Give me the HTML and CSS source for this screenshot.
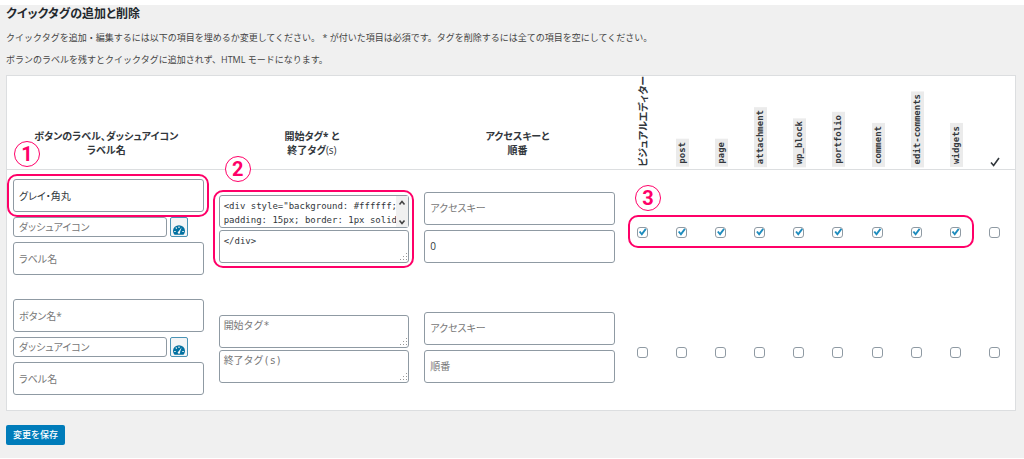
FILE: index.html
```html
<!DOCTYPE html>
<html lang="ja">
<head>
<meta charset="utf-8">
<title>クイックタグの追加と削除</title>
<link rel="stylesheet" href="styles.css">
</head>
<body>
<svg class="defs" aria-hidden="true">
  <symbol id="gauge" viewBox="0 0 20 16"><path fill="currentColor" d="M2.500 16A10 9.600 0 1 1 17.500 16z"/><path fill="#f3f5f6" d="M9 2h2v2.500H9zM4 4.500l1.300-1.300 1.600 1.800-1.200 1.200zM2 9.500h2.500v2H2zM15.500 9.500H18v2h-2.500zM14.500 3.500l-2.800 8a2 2 0 1 1-2.500-1z"/></symbol>
  <symbol id="grip" viewBox="0 0 8 8"><path fill="#999" d="M6 0h1v1H6zM6 3h1v1H6zM3 3h1v1H3zM6 6h1v1H6zM3 6h1v1H3zM0 6h1v1H0z"/></symbol>
  <symbol id="scroll" viewBox="0 0 12 31"><path fill="#f0f0f0" d="M0 0h12v31H0z"/><path fill="none" stroke="#444" stroke-width="1.600" d="M3.500 8.500 6 5.500l2.500 3M3.500 24.500l2.500 3 2.500-3"/></symbol>
</svg>
<main class="page">
  <h1 class="title">クイックタグの追加と削除</h1>
  <p class="note">クイックタグを追加・編集するには以下の項目を埋めるか変更してください。 * が付いた項目は必須です。タグを削除するには全ての項目を空にしてください。</p>
  <p class="note">ボランのラベルを残すとクイックタグに追加されず、HTML モードになります。</p>
  <form>
    <table class="tags">
      <colgroup><col class="wide" span="3"><col span="10"></colgroup>
      <thead>
        <tr>
          <th scope="col">ボタンのラベル、ダッシュアイコン<br>ラベル名</th>
          <th scope="col">開始タグ* と<br>終了タグ<span class="plain">(s)</span></th>
          <th scope="col">アクセスキーと<br>順番</th>
          <th scope="col" class="up"><span class="side">ビジュアルエディター</span></th>
          <th scope="col" class="up"><code class="side">post</code></th>
          <th scope="col" class="up"><code class="side">page</code></th>
          <th scope="col" class="up"><code class="side">attachment</code></th>
          <th scope="col" class="up"><code class="side">wp_block</code></th>
          <th scope="col" class="up"><code class="side">portfolio</code></th>
          <th scope="col" class="up"><code class="side">comment</code></th>
          <th scope="col" class="up"><code class="side">edit-comments</code></th>
          <th scope="col" class="up"><code class="side">widgets</code></th>
          <th scope="col" class="up"><svg class="tick" viewBox="0 0 10 10" role="img" aria-label="すべて"><path d="M1 5.500 3.600 8.500 9 1" fill="none" stroke="#32373c" stroke-width="1.600"/></svg></th>
        </tr>
      </thead>
      <tbody>
        <tr>
          <td>
            <div class="stack">
              <div class="field"><input class="box" type="text" value="グレイ・角丸" aria-label="ボタン名"><span class="ring"></span><span class="num num-one">1</span></div>
              <div class="icon-row"><input class="box small" type="text" placeholder="ダッシュアイコン" aria-label="ダッシュアイコン"><button class="pick" type="button" aria-label="アイコンを選択"><svg><use href="#gauge"/></svg></button></div>
              <input class="box" type="text" placeholder="ラベル名" aria-label="ラベル名">
            </div>
          </td>
          <td class="codes">
            <div class="stack tight field">
              <div class="field"><textarea class="box area" aria-label="開始タグ">&lt;div style="background: #ffffff;
padding: 15px; border: 1px solid</textarea><svg class="scroll" aria-hidden="true"><use href="#scroll"/></svg></div>
              <div class="field"><textarea class="box area" aria-label="終了タグ">&lt;/div&gt;</textarea><svg class="grip" aria-hidden="true"><use href="#grip"/></svg></div>
              <span class="ring"></span><span class="num num-two">2</span>
            </div>
          </td>
          <td>
            <div class="stack">
              <input class="box" type="text" placeholder="アクセスキー" aria-label="アクセスキー">
              <input class="box" type="text" value="0" aria-label="順番">
            </div>
          </td>
          <td class="check"><input type="checkbox" checked aria-label="ビジュアルエディター"><span class="ring ring-row"></span><span class="num num-three">3</span></td>
          <td class="check"><input type="checkbox" checked aria-label="post"></td>
          <td class="check"><input type="checkbox" checked aria-label="page"></td>
          <td class="check"><input type="checkbox" checked aria-label="attachment"></td>
          <td class="check"><input type="checkbox" checked aria-label="wp_block"></td>
          <td class="check"><input type="checkbox" checked aria-label="portfolio"></td>
          <td class="check"><input type="checkbox" checked aria-label="comment"></td>
          <td class="check"><input type="checkbox" checked aria-label="edit-comments"></td>
          <td class="check"><input type="checkbox" checked aria-label="widgets"></td>
          <td class="check"><input type="checkbox" aria-label="すべて"></td>
        </tr>
        <tr>
          <td>
            <div class="stack">
              <input class="box" type="text" placeholder="ボタン名*" aria-label="ボタン名">
              <div class="icon-row"><input class="box small" type="text" placeholder="ダッシュアイコン" aria-label="ダッシュアイコン"><button class="pick" type="button" aria-label="アイコンを選択"><svg><use href="#gauge"/></svg></button></div>
              <input class="box" type="text" placeholder="ラベル名" aria-label="ラベル名">
            </div>
          </td>
          <td class="codes">
            <div class="stack tight">
              <div class="field"><textarea class="box area" placeholder="開始タグ*" aria-label="開始タグ"></textarea><svg class="grip" aria-hidden="true"><use href="#grip"/></svg></div>
              <div class="field"><textarea class="box area" placeholder="終了タグ(s)" aria-label="終了タグ"></textarea><svg class="grip" aria-hidden="true"><use href="#grip"/></svg></div>
            </div>
          </td>
          <td>
            <div class="stack">
              <input class="box" type="text" placeholder="アクセスキー" aria-label="アクセスキー">
              <input class="box" type="text" placeholder="順番" aria-label="順番">
            </div>
          </td>
          <td class="check"><input type="checkbox" aria-label="ビジュアルエディター"></td>
          <td class="check"><input type="checkbox" aria-label="post"></td>
          <td class="check"><input type="checkbox" aria-label="page"></td>
          <td class="check"><input type="checkbox" aria-label="attachment"></td>
          <td class="check"><input type="checkbox" aria-label="wp_block"></td>
          <td class="check"><input type="checkbox" aria-label="portfolio"></td>
          <td class="check"><input type="checkbox" aria-label="comment"></td>
          <td class="check"><input type="checkbox" aria-label="edit-comments"></td>
          <td class="check"><input type="checkbox" aria-label="widgets"></td>
          <td class="check"><input type="checkbox" aria-label="すべて"></td>
        </tr>
      </tbody>
    </table>
    <button class="save" type="submit">変更を保存</button>
  </form>
</main>
</body>
</html>
```
FILE: styles.css
```css
* { box-sizing: border-box; }
body {
  display: flex;
  flex-direction: column;
  min-height: 100vh;
  margin: 0;
  padding: 5px 0 1px;
  background: #fff;
  color: #444;
  font: 10px/14px "Open Sans", "Noto Sans CJK JP", sans-serif;
}
.defs { position: absolute; width: 0; height: 0; }
.page { flex: 1; padding: 0 8px 12px 6px; background: #f0f0f0; }
.title {
  margin: 0 0 8px;
  color: #23282d;
  font-size: 12px;
  line-height: 18px;
  font-weight: 700;
  font-feature-settings: "palt";
}
.note { margin: 0 0 8px; font-size: 9px; }

.tags {
  width: 100%;
  table-layout: fixed;
  border-collapse: separate;
  border-spacing: 0;
  border: 1px solid #dcdee0;
  background: #fff;
}
.wide { width: 20.4%; }
th {
  height: 94px;
  padding: 0 7px 12px 0;
  border-bottom: 1px solid #dcdee0;
  color: #32373c;
  font-weight: 700;
  font-feature-settings: "palt";
  text-align: center;
  vertical-align: bottom;
}
.plain { font-weight: 400; }
.up { padding: 0 0 2px; }
.side {
  display: inline-block;
  margin-top: -8px;
  line-height: 14px;
  vertical-align: bottom;
  white-space: nowrap;
  writing-mode: vertical-rl;
  text-orientation: sideways;
  transform: rotate(180deg);
}
code.side {
  padding: 3px 0;
  background: #ebebeb;
  font: 700 9px/13px "DejaVu Sans Mono", monospace;
}
.tick { display: inline-block; width: 10px; height: 10px; vertical-align: bottom; }
td { padding: 9px 9px 15px 6px; }
td.codes { padding: 10px 9px 13px 6px; }
td.check { position: relative; padding: 4px 2px 0 0; text-align: center; }

.stack { display: flex; flex-direction: column; gap: 5px; }
.stack.tight { gap: 2px; }
.field { position: relative; display: flex; }
.stack.field { flex-direction: column; }
.box {
  display: block;
  width: 100%;
  height: 33px;
  margin: 0;
  padding: 0 5px;
  border: 1px solid #8f9aa3;
  border-radius: 3px;
  background: #fff;
  color: #32373c;
  font: inherit;
  font-feature-settings: "palt";
}
.box::placeholder { color: #777; opacity: 1; }
.box.small { flex: 1; height: 20px; }
.area {
  padding: 3px 4px;
  overflow: hidden;
  resize: none;
  font: 9px/14px "DejaVu Sans Mono", "Noto Sans CJK JP", monospace;
}
.area::placeholder { font-size: 10px; }
.icon-row { display: flex; gap: 3px; padding-right: 16px; }
.pick {
  display: flex;
  align-items: flex-end;
  justify-content: center;
  width: 18px;
  height: 20px;
  padding: 0 0 1px;
  border: 1px solid #4a93b5;
  border-radius: 2px;
  background: #f3f5f6;
  color: #0071a1;
}
.pick svg { width: 12px; height: 10px; }
.grip { position: absolute; right: 1px; bottom: 2px; width: 8px; height: 8px; }
.scroll { position: absolute; right: 1px; top: 1px; width: 12px; height: 31px; }

input[type="checkbox"] {
  display: block;
  width: 11px;
  height: 11px;
  margin: 0 auto;
  border: 1px solid #8f9aa3;
  border-radius: 3px;
  background: #fff;
  appearance: none;
}
input[type="checkbox"]:checked::before {
  content: "";
  display: block;
  width: 9px;
  height: 9px;
  background: #1e8cbe;
  clip-path: polygon(10% 50%, 28% 38%, 42% 58%, 80% 8%, 96% 22%, 44% 92%);
}

.ring {
  position: absolute;
  inset: -5px -5px -5px -6px;
  border: 2px solid #ff0068;
  border-radius: 10px;
  pointer-events: none;
}
.ring-row { inset: 45px auto auto 4px; width: calc(900% - 6px); height: 33px; }
.num {
  position: absolute;
  width: 26px;
  height: 26px;
  border: 1px solid #ff0068;
  border-radius: 50%;
  background: #fff;
  color: #ff0068;
  font: 700 20px/24px Roboto, sans-serif;
  text-align: center;
}
.num-one { top: -38px; left: 1px; }
.num-two { top: -39px; left: 6px; }
.num-three { top: 15px; left: 11px; }

.save {
  display: block;
  height: 20px;
  margin-top: 14px;
  padding: 0 7px;
  border: 0;
  border-radius: 2px;
  background: #007cba;
  color: #fff;
  font: 500 9px/20px "Noto Sans CJK JP", sans-serif;
}
```
